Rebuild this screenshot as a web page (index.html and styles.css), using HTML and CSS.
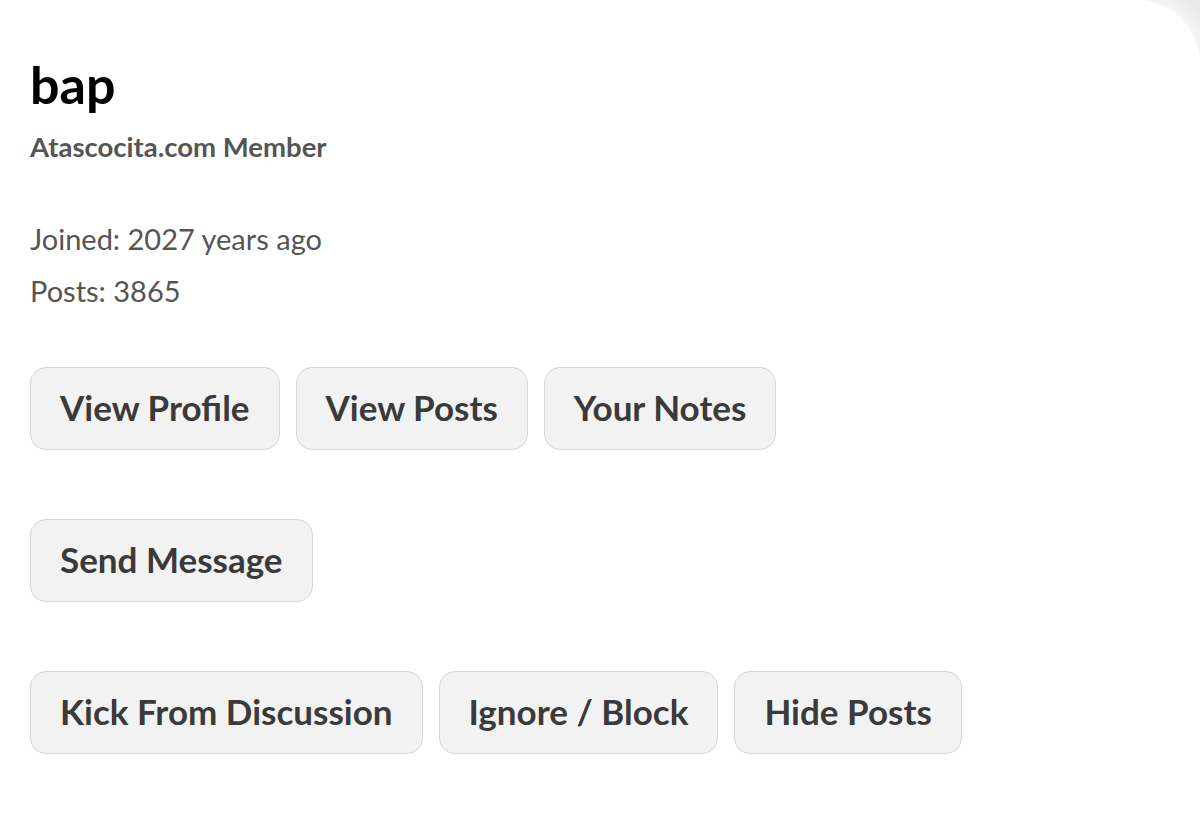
FILE: index.html
```html
<!DOCTYPE html>
<html lang="en">
<head>
<meta charset="utf-8">
<title>bap</title>
<link rel="stylesheet" href="styles.css">
</head>
<body>
<div class="card">
  <h1 class="name">bap</h1>
  <div class="role">Atascocita.com Member</div>
  <div class="stats">
    <div class="stat">Joined: 2027 years ago</div>
    <div class="stat">Posts: 3865</div>
  </div>
  <div class="actions">
    <div class="row">
      <button class="btn">View Profile</button>
      <button class="btn">View Posts</button>
      <button class="btn">Your Notes</button>
    </div>
    <div class="row">
      <button class="btn">Send Message</button>
    </div>
    <div class="row">
      <button class="btn">Kick From Discussion</button>
      <button class="btn">Ignore / Block</button>
      <button class="btn">Hide Posts</button>
    </div>
  </div>
</div>
</body>
</html>
```

FILE: styles.css
```css
html, body {
  margin: 0;
  padding: 0;
  overflow: hidden;
}
body {
  background: #e8e8e8;
  font-family: Lato, "Open Sans", sans-serif;
}
.card {
  box-sizing: border-box;
  width: 1200px;
  height: 835px;
  padding: 54px 30px 0 30px;
  background: #ffffff;
  border-top-right-radius: 64px;
  box-shadow: 0 0 26px 4px #ffffff;
}
.name {
  margin: 0;
  font-size: 52px;
  line-height: 60px;
  font-weight: 700;
  color: #000000;
}
.role {
  margin-top: 16px;
  font-size: 27.5px;
  line-height: 34px;
  font-weight: 700;
  color: #555555;
}
.stats {
  margin-top: 49px;
}
.stat {
  font-size: 29px;
  line-height: 52px;
  color: #555555;
}
.actions {
  margin-top: 50px;
  display: flex;
  flex-direction: column;
  gap: 69px;
}
.row {
  display: flex;
  gap: 16px;
}
.btn {
  box-sizing: border-box;
  height: 83px;
  padding: 0 29px 3px 29px;
  display: inline-flex;
  align-items: center;
  font-family: Lato, "Open Sans", sans-serif;
  font-size: 35px;
  line-height: 42px;
  font-weight: 700;
  color: #3a3a3a;
  background: #f2f2f3;
  border: 1px solid #d6d6dc;
  border-radius: 16px;
}
```
